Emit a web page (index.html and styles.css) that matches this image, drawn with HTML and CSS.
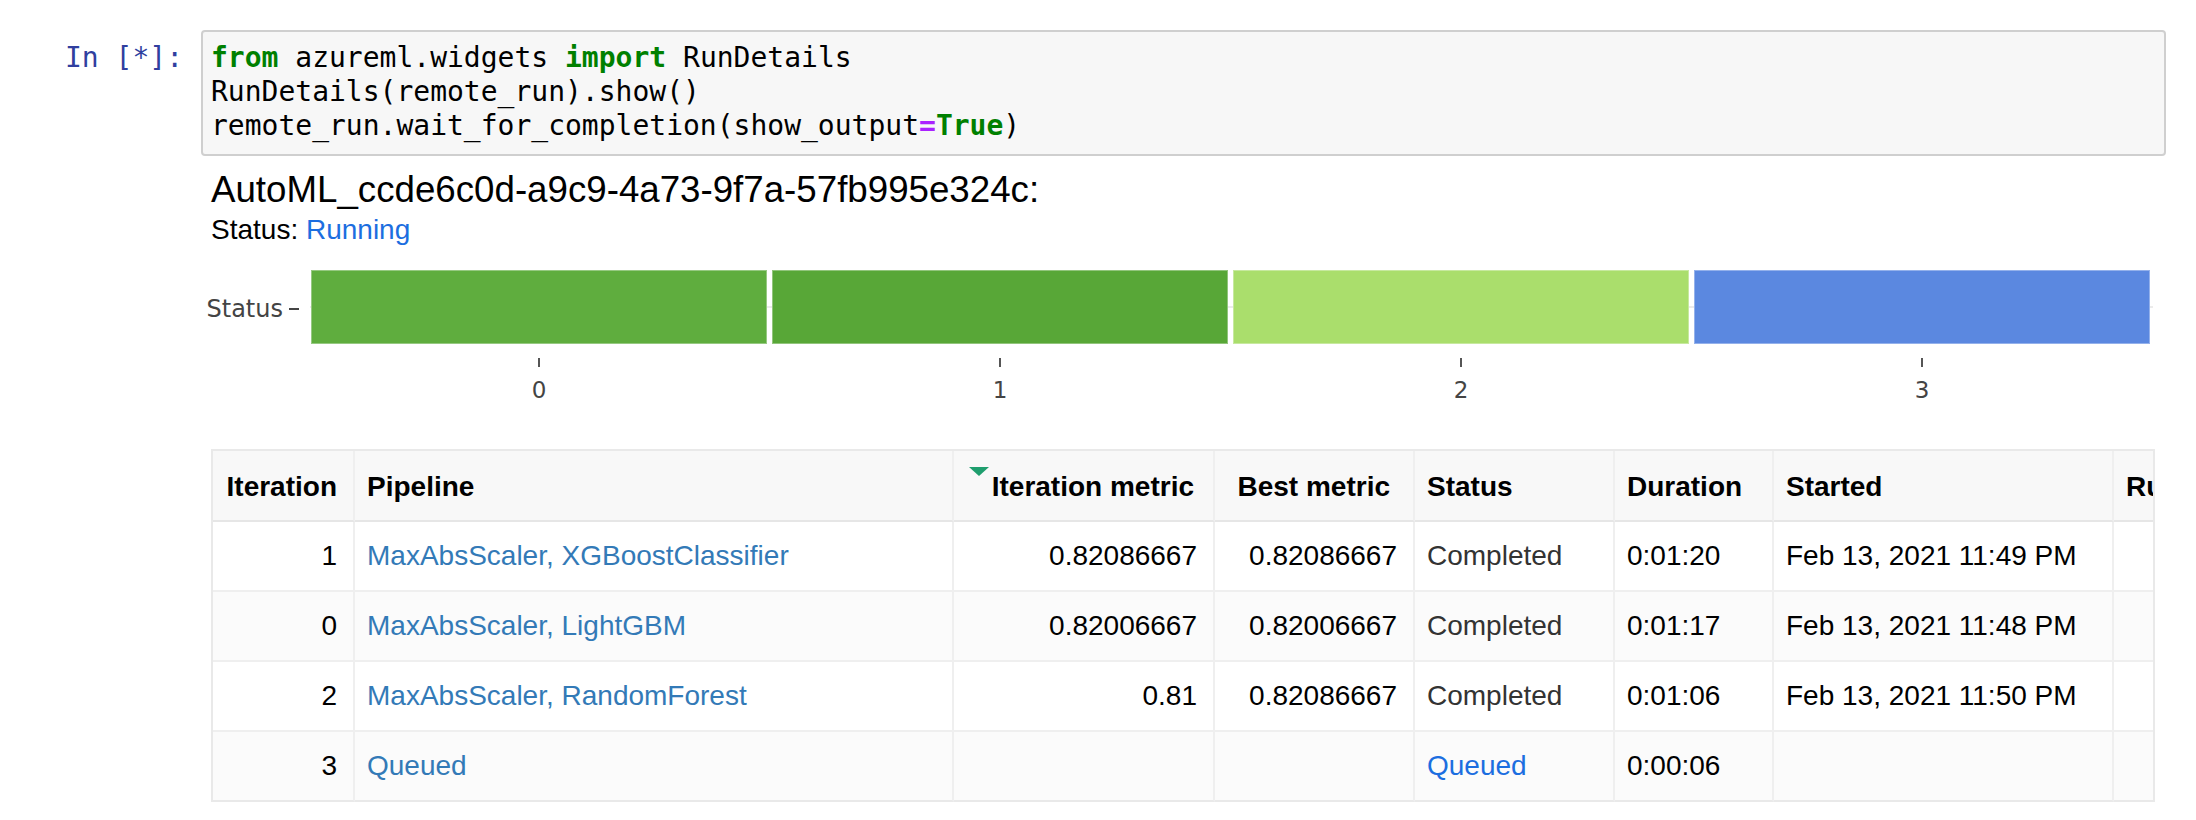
FILE: index.html
```html
<!DOCTYPE html>
<html>
<head>
<meta charset="utf-8">
<title>RunDetails</title>
<link rel="stylesheet" href="styles.css">
</head>
<body>
<div class="notebook">
  <div class="cell">
    <div class="prompt">In [*]:</div>
    <div class="input">
<pre><span class="kw">from</span> azureml.widgets <span class="kw">import</span> RunDetails
RunDetails(remote_run).show()
remote_run.wait_for_completion(show_output<span class="op">=</span><span class="kw">True</span>)</pre>
    </div>
  </div>

  <div class="output">
    <div class="run-title">AutoML_ccde6c0d-a9c9-4a73-9f7a-57fb995e324c:</div>
    <div class="run-status">Status: <span class="running">Running</span></div>

    <div class="chart">
      <div class="chart-row">
        <div class="ylabel"><span class="ylabel-text">Status</span><span class="ytick"></span></div>
        <div class="plot">
          <div class="bars">
            <div class="bar bar-c0"></div>
            <div class="bar bar-c1"></div>
            <div class="bar bar-c2"></div>
            <div class="bar bar-c3"></div>
          </div>
        </div>
      </div>
      <div class="xaxis">
        <div class="xtick"><span class="tick"></span><span class="tick-label">0</span></div>
        <div class="xtick"><span class="tick"></span><span class="tick-label">1</span></div>
        <div class="xtick"><span class="tick"></span><span class="tick-label">2</span></div>
        <div class="xtick"><span class="tick"></span><span class="tick-label">3</span></div>
      </div>
    </div>

    <div class="table-wrap">
      <table class="runs">
        <thead>
          <tr>
            <th class="w-iter num">Iteration</th>
            <th class="w-pipe">Pipeline</th>
            <th class="w-imetric num"><span class="sort"></span>Iteration metric</th>
            <th class="w-bmetric num">Best metric</th>
            <th class="w-status">Status</th>
            <th class="w-dur">Duration</th>
            <th class="w-start">Started</th>
            <th class="w-run">Run Id</th>
          </tr>
        </thead>
        <tbody>
          <tr>
            <td class="num">1</td>
            <td><a class="link">MaxAbsScaler, XGBoostClassifier</a></td>
            <td class="num">0.82086667</td>
            <td class="num">0.82086667</td>
            <td class="done">Completed</td>
            <td>0:01:20</td>
            <td>Feb 13, 2021 11:49 PM</td>
            <td></td>
          </tr>
          <tr class="alt">
            <td class="num">0</td>
            <td><a class="link">MaxAbsScaler, LightGBM</a></td>
            <td class="num">0.82006667</td>
            <td class="num">0.82006667</td>
            <td class="done">Completed</td>
            <td>0:01:17</td>
            <td>Feb 13, 2021 11:48 PM</td>
            <td></td>
          </tr>
          <tr>
            <td class="num">2</td>
            <td><a class="link">MaxAbsScaler, RandomForest</a></td>
            <td class="num">0.81</td>
            <td class="num">0.82086667</td>
            <td class="done">Completed</td>
            <td>0:01:06</td>
            <td>Feb 13, 2021 11:50 PM</td>
            <td></td>
          </tr>
          <tr class="alt">
            <td class="num">3</td>
            <td><a class="link">Queued</a></td>
            <td class="num"></td>
            <td class="num"></td>
            <td class="queued">Queued</td>
            <td>0:00:06</td>
            <td></td>
            <td></td>
          </tr>
        </tbody>
      </table>
    </div>
  </div>
</div>
</body>
</html>
```
FILE: styles.css
```css
* { box-sizing: border-box; }
html, body { margin: 0; padding: 0; background: #fff; }
body {
  font-family: "Liberation Sans", Arial, Helvetica, sans-serif;
  color: #000;
}

.notebook { padding-top: 30px; }

.cell { display: flex; align-items: flex-start; }

.prompt {
  width: 201px;
  padding-right: 18px;
  padding-top: 11px;
  text-align: right;
  font-family: "DejaVu Sans Mono", monospace;
  font-size: 28px;
  line-height: 34px;
  color: #303f9f;
  white-space: pre;
}

.input {
  width: 1965px;
  background: #f7f7f7;
  border: 2px solid #cfcfcf;
  border-radius: 4px;
  padding: 9px 8px 11px;
}

.input pre {
  margin: 0;
  font-family: "DejaVu Sans Mono", monospace;
  font-size: 28px;
  line-height: 34px;
  color: #000;
}

.kw { color: #008000; font-weight: bold; }
.op { color: #aa22ff; font-weight: bold; }

.output { padding-left: 211px; }

.run-title {
  margin-top: 13px;
  font-size: 36.7px;
  line-height: 42px;
}

.run-status {
  margin-top: 3px;
  font-size: 28px;
  line-height: 32px;
}

.running { color: #1c6ee0; }

/* chart */
.chart { margin-top: 24px; margin-left: -1px; }

.chart-row { display: flex; align-items: center; }

.ylabel {
  width: 100px;
  padding-top: 4px;
  display: flex;
  justify-content: flex-end;
  align-items: center;
  font-family: "DejaVu Sans", Verdana, sans-serif;
  font-size: 24px;
  line-height: 28px;
  color: #444;
  white-space: nowrap;
}

.ytick {
  flex: none;
  width: 10px;
  height: 2px;
  background: #444;
  margin-left: 6px;
  margin-right: 11px;
}

.plot {
  width: 1843px;
  padding: 0 3px 0 1px;
  background: linear-gradient(#ebebeb, #ebebeb) center / 100% 2px no-repeat;
}

.bars {
  display: grid;
  grid-template-columns: repeat(4, 1fr);
  column-gap: 5px;
}

.bar {
  height: 74px;
  box-shadow: inset 0 0 0 1px rgba(255, 255, 255, 0.35);
}
.bar-c0 { background: #5fad3e; }
.bar-c1 { background: #58a737; }
.bar-c2 { background: #aade6c; }
.bar-c3 { background: #5b88e0; }

.xaxis {
  margin-left: 100px;
  width: 1843px;
  padding: 0 3px 0 1px;
  display: grid;
  grid-template-columns: repeat(4, 1fr);
  column-gap: 5px;
}

.xtick {
  display: flex;
  flex-direction: column;
  align-items: center;
}

.tick {
  width: 2px;
  height: 9px;
  margin-top: 14px;
  background: #555;
}

.tick-label {
  margin-top: 9px;
  font-family: "DejaVu Sans", Verdana, sans-serif;
  font-size: 23px;
  line-height: 28px;
  color: #444;
}

/* table */
.table-wrap {
  margin-top: 45px;
  width: 1944px;
  overflow: hidden;
  border-right: 2px solid #e9e9e9;
}

.runs {
  width: 2103px;
  table-layout: fixed;
  border-collapse: separate;
  border-spacing: 0;
  border-top: 2px solid #e9e9e9;
  border-left: 2px solid #e9e9e9;
  font-size: 28px;
}

.runs th, .runs td {
  box-sizing: border-box;
  padding: 0 16px 0 12px;
  border-right: 2px solid #efefef;
  border-bottom: 2px solid #efefef;
  text-align: left;
  vertical-align: middle;
  white-space: nowrap;
  overflow: hidden;
}

.runs th {
  height: 71px;
  padding-top: 3px;
  background: #f8f8f8;
  font-weight: bold;
  border-bottom-color: #e6e6e6;
}

.runs td { height: 70px; background: #fff; }
.runs tr.alt td { background: #fbfbfb; }
.runs tbody tr:last-child td { border-bottom-color: #e9e9e9; }

.runs .num { text-align: right; }
.runs th.w-imetric { padding-right: 19px; }
.runs th.w-bmetric { padding-right: 23px; }

.w-iter { width: 142px; }
.w-pipe { width: 599px; }
.w-imetric { width: 261px; }
.w-bmetric { width: 200px; }
.w-status { width: 200px; }
.w-dur { width: 159px; }
.w-start { width: 340px; }
.w-run { width: 200px; }

.sort {
  display: inline-block;
  width: 0;
  height: 0;
  border-left: 10px solid transparent;
  border-right: 10px solid transparent;
  border-top: 9px solid #1f9e6e;
  vertical-align: text-top;
  margin-top: -4px;
  margin-right: 3px;
}

.link { color: #337ab7; text-decoration: none; }
.done { color: #333; }
.queued { color: #1c6ee0; }
```
